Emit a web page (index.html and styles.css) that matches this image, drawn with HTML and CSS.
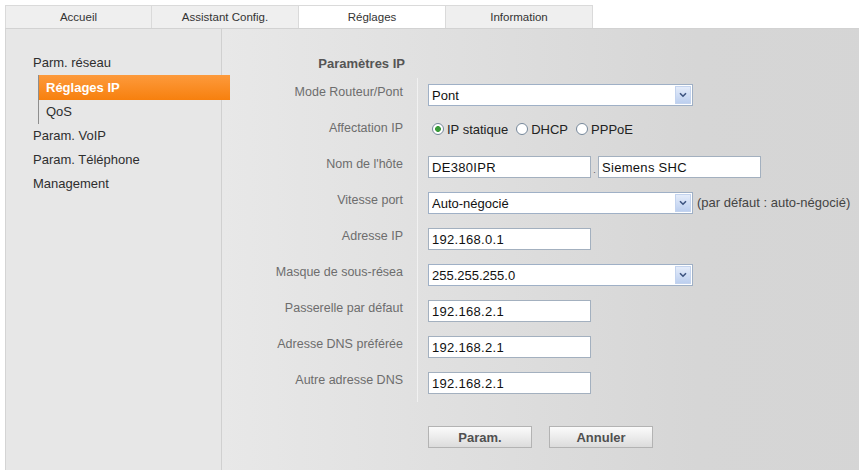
FILE: index.html
```html
<!DOCTYPE html>
<html lang="fr">
<head>
  <meta charset="UTF-8">
  <title>Réglages IP</title>
  <link rel="stylesheet" href="styles.css">
</head>
<body>
  <div class="page">
    <ul class="tabs">
      <li class="tab">Accueil</li>
      <li class="tab">Assistant Config.</li>
      <li class="tab tab-active">Réglages</li>
      <li class="tab">Information</li>
    </ul>

    <div class="panel">
      <ul class="nav">
        <li class="nav-item">Parm. réseau
          <ul class="subnav">
            <li class="subnav-item subnav-active">Réglages IP</li>
            <li class="subnav-item">QoS</li>
          </ul>
        </li>
        <li class="nav-item">Param. VoIP</li>
        <li class="nav-item">Param. Téléphone</li>
        <li class="nav-item">Management</li>
      </ul>

      <div class="content">
        <div class="form">
          <div class="form-title">Paramètres IP</div>
          <div class="form-title-gap"></div>

          <div class="label">Mode Routeur/Pont</div>
          <div class="field">
            <span class="select">
              <select><option>Pont</option></select>
              <span class="arrow"><svg width="8" height="6" viewBox="0 0 8 6"><path d="M1 1.2 L4 4.2 L7 1.2" fill="none" stroke="#3d5480" stroke-width="1.6"/></svg></span>
            </span>
          </div>

          <div class="label">Affectation IP</div>
          <div class="field">
            <div class="radios">
              <label class="radio"><input type="radio" name="ip" checked> IP statique</label>
              <label class="radio"><input type="radio" name="ip"> DHCP</label>
              <label class="radio"><input type="radio" name="ip"> PPPoE</label>
            </div>
          </div>

          <div class="label">Nom de l'hôte</div>
          <div class="field">
            <input class="text" type="text" value="DE380IPR">
            <span class="dot">.</span>
            <input class="text" type="text" value="Siemens SHC">
          </div>

          <div class="label">Vitesse port</div>
          <div class="field">
            <span class="select">
              <select><option>Auto-négocié</option></select>
              <span class="arrow"><svg width="8" height="6" viewBox="0 0 8 6"><path d="M1 1.2 L4 4.2 L7 1.2" fill="none" stroke="#3d5480" stroke-width="1.6"/></svg></span>
            </span>
            <span class="hint">(par défaut : auto-négocié)</span>
          </div>

          <div class="label">Adresse IP</div>
          <div class="field"><input class="text" type="text" value="192.168.0.1"></div>

          <div class="label">Masque de sous-résea</div>
          <div class="field">
            <span class="select">
              <select><option>255.255.255.0</option></select>
              <span class="arrow"><svg width="8" height="6" viewBox="0 0 8 6"><path d="M1 1.2 L4 4.2 L7 1.2" fill="none" stroke="#3d5480" stroke-width="1.6"/></svg></span>
            </span>
          </div>

          <div class="label">Passerelle par défaut</div>
          <div class="field"><input class="text" type="text" value="192.168.2.1"></div>

          <div class="label">Adresse DNS préférée</div>
          <div class="field"><input class="text" type="text" value="192.168.2.1"></div>

          <div class="label">Autre adresse DNS</div>
          <div class="field"><input class="text" type="text" value="192.168.2.1"></div>
        </div>

        <div class="buttons">
          <button class="btn">Param.</button>
          <button class="btn">Annuler</button>
        </div>
      </div>
    </div>
  </div>
</body>
</html>
```

FILE: styles.css
```css
* {
  margin: 0;
  padding: 0;
  box-sizing: border-box;
}

body {
  background-color: #fff;
  font-family: "Liberation Sans", Arial, sans-serif;
  color: #333;
  overflow: hidden;
}

.page {
  padding: 5px 0 0 5px;
  width: 900px;
}

/* onglets */
.tabs {
  display: flex;
  list-style: none;
}

.tab {
  width: 147px;
  height: 23px;
  line-height: 22px;
  text-align: center;
  font-size: 11.5px;
  color: #333;
  background-color: #efefef;
  border: 1px solid #dadada;
  border-bottom: none;
  border-left: none;
}

.tab:first-child {
  border-left: 1px solid #dadada;
}

.tab-active {
  background-color: #fff;
}

/* panneau */
.panel {
  display: flex;
  min-height: 460px;
  border-top: 1px solid #d2d2d2;
}

.nav {
  width: 217px;
  list-style: none;
  background-color: #e7e7e7;
  border-left: 1px solid #d4d4d4;
  border-right: 1px solid #d0d0d0;
  padding: 22px 0 0 27px;
  font-size: 13px;
  color: #2e2e2e;
}

.nav-item {
  line-height: 24px;
}

.subnav {
  list-style: none;
  margin-left: 5px;
  border-left: 1px solid #8e8e8e;
}

.subnav-item {
  padding-left: 7px;
  line-height: 24px;
}

.subnav-active {
  position: relative;
  margin-right: -9px;
  line-height: 25px;
  font-weight: bold;
  color: #fff;
  background: linear-gradient(#fd9a3c, #f7800e);
}

/* formulaire */
.content {
  flex: 1;
  padding-top: 23px;
  background: linear-gradient(to right, #e8e8e8, #d6d6d6 70%, #d5d5d5);
}

.form {
  display: grid;
  grid-template-columns: 195px 1fr;
  grid-auto-rows: 36px;
  grid-template-rows: 26px;
}

.form-title {
  text-align: right;
  padding: 4px 12px 0 0;
  line-height: 16px;
  font-size: 13px;
  font-weight: bold;
  color: #555;
}

.label {
  text-align: right;
  padding: 6px 14px 0 0;
  line-height: 16px;
  font-size: 12.5px;
  color: #6d6d6d;
}

.field {
  display: flex;
  align-items: flex-start;
  padding: 6px 0 0 10px;
  border-left: 1px solid #f1f1f1;
}

.text {
  width: 163px;
  height: 22px;
  border: 1px solid #a3b0bf;
  padding: 1px 3px 0;
  font-family: "Liberation Sans", Arial, sans-serif;
  font-size: 13px;
  letter-spacing: 0.3px;
  color: #111;
  background-color: #fff;
}

.dot {
  width: 7px;
  height: 22px;
  line-height: 28px;
  text-align: center;
  font-size: 9px;
  color: #555;
}

.select {
  position: relative;
  display: inline-block;
}

.select select {
  -webkit-appearance: none;
  appearance: none;
  width: 265px;
  height: 22px;
  border: 1px solid #9fb0c6;
  padding: 1px 3px 0;
  font-family: "Liberation Sans", Arial, sans-serif;
  font-size: 13px;
  color: #111;
  background-color: #fff;
}

.arrow {
  position: absolute;
  top: 2px;
  right: 2px;
  width: 16px;
  height: 18px;
  display: flex;
  align-items: center;
  justify-content: center;
  background: linear-gradient(#e4ecfa, #bccfef);
  border: 1px solid #c3d3ee;
  pointer-events: none;
}

.hint {
  margin-left: 4px;
  line-height: 22px;
  font-size: 13px;
  color: #444;
}

.radios {
  display: flex;
  align-items: center;
  height: 18px;
  margin-left: 4px;
  font-size: 13px;
  color: #222;
}

.radio {
  display: flex;
  align-items: center;
  margin-right: 8px;
}

.radio input {
  -webkit-appearance: none;
  appearance: none;
  width: 12px;
  height: 12px;
  margin-right: 3px;
  border: 1px solid #76889b;
  border-radius: 50%;
  background-color: #fff;
}

.radio input:checked {
  background: radial-gradient(circle, #3a9a3a 0 2.6px, #fff 3.2px);
}

/* boutons */
.buttons {
  display: flex;
  gap: 17px;
  margin: 24px 0 0 206px;
}

.btn {
  width: 104px;
  height: 22px;
  border: 1px solid #b3b3b3;
  background: linear-gradient(#fbfbfb, #dcdcdc);
  font-family: "Liberation Sans", Arial, sans-serif;
  font-size: 13px;
  font-weight: bold;
  color: #505050;
}
```
